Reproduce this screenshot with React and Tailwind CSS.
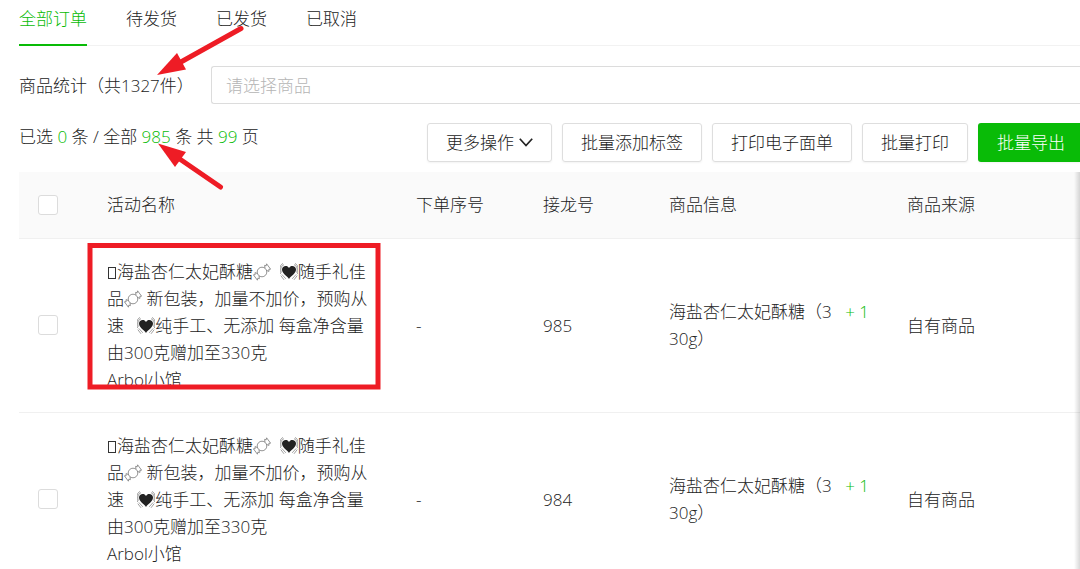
import { useState } from 'react';

const tabs = ['全部订单', '待发货', '已发货', '已取消'];

const actions = ['批量添加标签', '打印电子面单', '批量打印'];

const orders = [
  { id: 985, serial: '-', count: 1, source: '自有商品' },
  { id: 984, serial: '-', count: 1, source: '自有商品' },
];

function Candy() {
  return (
    <svg
      viewBox="0 0 18 18"
      className="inline-block w-[18px] h-[18px] align-[-3px]"
      fill="none"
      stroke="#777"
      strokeWidth="0.8"
      strokeLinejoin="round">
      <circle cx="9" cy="9" r="4.8" />
      <path d="M12 5.2 L11.6 2.4 L13.2 2.8 L13.6 0.8 L17.6 6.2 L15.8 6.4 L16 8.4 L13.4 7.4" />
      <path d="M6 12.8 L6.4 15.6 L4.8 15.2 L4.4 17.2 L0.4 11.8 L2.2 11.6 L2 9.6 L4.6 10.6" />
    </svg>
  );
}

function Heart() {
  return (
    <svg
      viewBox="0 0 18 18"
      className="inline-block w-[18px] h-[18px] align-[-3px]"
      fill="none">
      <path
        d="M9 16 C7.2 13.2 2 10.6 2 6.6 C2 2.6 7.4 1.6 9 5 C10.6 1.6 16 2.6 16 6.6 C16 10.6 10.8 13.2 9 16 Z"
        fill="#222"
      />
      <path
        d="M1.4 9.6 C0.2 6.4 0.8 3 4 1.7 M0.5 11 C-0.6 6 -0.2 1.8 3 0.5 M16.6 9.6 C17.8 6.4 17.2 3 14 1.7 M17.5 11 C18.6 6 18.2 1.8 15 0.5 M1.8 11.4 L5.8 15.8 M16.2 11.4 L12.2 15.8 M0.8 12.6 L4 16.8 M17.2 12.6 L14 16.8"
        stroke="#888"
        strokeWidth="0.8"
      />
    </svg>
  );
}

// Glyph box shown where the system has no emoji for the character
function MissingGlyph() {
  return (
    <span className="inline-block w-2 h-3 mx-px border border-[#333] align-[-1px]" />
  );
}

function Checkbox({ label }) {
  return (
    <input
      type="checkbox"
      aria-label={label}
      className="block w-5 h-5 appearance-none bg-white border border-[#dcdcdc] rounded-[3px] checked:bg-[#09bb07]"
    />
  );
}

function Annotations() {
  return (
    <svg
      width="400"
      height="400"
      className="absolute top-0 left-0 pointer-events-none"
      fill="none"
      stroke="#ee1c25"
      strokeWidth="5"
      strokeLinecap="round">
      <path d="M241 28.5 L180 62.5" />
      <path d="M157 75 L177 53 L186 69.5 Z" fill="#ee1c25" stroke="none" />
      <path d="M220.5 187 L179 158.5" />
      <path d="M158 143.5 L186 152 L175 167 Z" fill="#ee1c25" stroke="none" />
      <rect x="90" y="245.5" width="288" height="141.5" strokeLinecap="butt" />
    </svg>
  );
}

export default function App() {
  const [activeTab, setActiveTab] = useState('全部订单');

  return (
    <div className="relative h-screen overflow-hidden bg-white pl-[19px] text-[17px] leading-[27px] font-light text-[#222] font-['Open_Sans','Noto_Sans_CJK_SC',sans-serif]">
      {/* Tabs */}
      <nav className="flex gap-[39px] h-[46px] border-b border-[#f2f2f2]">
        {tabs.map((tab) => (
          <button
            key={tab}
            onClick={() => setActiveTab(tab)}
            className={`h-[46px] pt-0.5 pb-2.5 border-b-2 ${
              activeTab === tab
                ? 'border-[#09bb07] text-[#09bb07]'
                : 'border-transparent'
            }`}>
            {tab}
          </button>
        ))}
      </nav>

      {/* Product filter */}
      <div className="flex items-center mt-5">
        <label htmlFor="product" className="w-48 whitespace-nowrap">
          商品统计（共1327件）
        </label>
        <input
          id="product"
          type="text"
          placeholder="请选择商品"
          className="flex-1 min-w-0 h-[38px] px-[14px] border border-r-0 border-[#dcdcdc] rounded-l-[3px] outline-none placeholder:text-[#b5b5b5]"
        />
      </div>

      {/* Summary and bulk actions */}
      <div className="flex justify-between items-start mt-[19px]">
        <p className="whitespace-nowrap">
          已选 <span className="text-[#09bb07]">0</span> 条 / 全部{' '}
          <span className="text-[#09bb07]">985</span> 条 共{' '}
          <span className="text-[#09bb07]">99</span> 页
        </p>
        <div className="flex gap-[10px] whitespace-nowrap">
          <button className="flex items-center gap-[5px] h-[39px] px-[18px] border border-[#dedede] rounded-[3px] shadow-xs">
            更多操作
            <svg
              viewBox="0 0 14 14"
              className="w-[14px] h-[14px]"
              fill="none"
              stroke="#222"
              strokeWidth="1.7">
              <path d="M0.8 2.8 L7 9.6 L13.2 2.8" />
            </svg>
          </button>
          {actions.map((action) => (
            <button
              key={action}
              className="h-[39px] px-[18px] border border-[#dedede] rounded-[3px] shadow-xs">
              {action}
            </button>
          ))}
          <button className="h-[39px] pl-[19px] pr-[15px] bg-[#09bb07] text-white rounded-l-[3px] shadow-xs">
            批量导出
          </button>
        </div>
      </div>

      {/* Orders */}
      <div className="relative mt-[10px]">
        <table className="w-full table-fixed text-left">
          <colgroup>
            <col className="w-[69px]" />
            <col className="w-[309px]" />
            <col className="w-[127px]" />
            <col className="w-[126px]" />
            <col className="w-[238px]" />
            <col />
          </colgroup>
          <thead>
            <tr className="h-[66px] bg-[#fafafa] border-b border-[#f0f0f0]">
              <th className="px-[19px] font-light">
                <Checkbox label="全选" />
              </th>
              <th className="px-[19px] font-light">活动名称</th>
              <th className="px-[19px] font-light">下单序号</th>
              <th className="px-[19px] font-light">接龙号</th>
              <th className="px-[19px] font-light">商品信息</th>
              <th className="px-[19px] font-light">商品来源</th>
            </tr>
          </thead>
          <tbody>
            {orders.map((order) => (
              <tr key={order.id} className="border-b border-[#f0f0f0]">
                <td className="px-[19px] py-[19px]">
                  <Checkbox label={`选择 ${order.id}`} />
                </td>
                <td className="px-[19px] py-[19px]">
                  <div>
                    <MissingGlyph />
                    海盐杏仁太妃酥糖
                    <Candy />
                    &nbsp; <Heart />
                    随手礼佳品
                    <Candy /> 新包装，加量不加价，预购从速 &nbsp; <Heart />
                    纯手工、无添加 每盒净含量由300克赠加至330克
                  </div>
                  <div>Arbol小馆</div>
                </td>
                <td className="px-[19px] py-[19px]">{order.serial}</td>
                <td className="px-[19px] py-[19px]">{order.id}</td>
                <td className="px-[19px] py-[19px]">
                  <div className="flex items-start justify-between">
                    <span className="w-[168px] break-all">
                      海盐杏仁太妃酥糖（330g）
                    </span>
                    <span className="text-[#09bb07] whitespace-nowrap">
                      + {order.count}
                    </span>
                  </div>
                </td>
                <td className="px-[19px] py-[19px]">{order.source}</td>
              </tr>
            ))}
          </tbody>
        </table>
        {/* Edge of the pinned column */}
        <div className="absolute inset-y-0 right-0 w-[6px] bg-linear-to-l from-black/15 to-transparent" />
      </div>

      <Annotations />
    </div>
  );
}
